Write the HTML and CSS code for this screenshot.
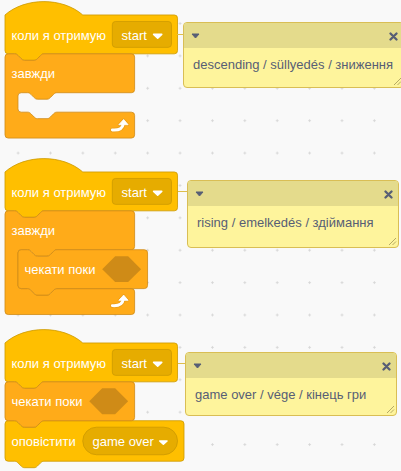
FILE: index.html
```html
<!DOCTYPE html>
<html lang="uk">
<head>
<meta charset="utf-8">
<title>Scratch scripts</title>
<link rel="stylesheet" href="styles.css">
</head>
<body>
<div class="canvas">

  <!-- Script 1 -->
  <svg class="script s1" viewBox="0 0 180 140" width="180" height="140">
    <g transform="scale(0.81)">
      <path class="ev" d="M0,16 c25,-22 71,-22 96,0 H209 a4,4 0 0 1 4,4 V60 a4,4 0 0 1 -4,4 H48 c-2,0 -3,1 -4,2 l-4,4 c-1,1 -2,2 -4,2 h-12 c-2,0 -3,-1 -4,-2 l-4,-4 c-1,-1 -2,-2 -4,-2 H4 a4,4 0 0 1 -4,-4 Z"/>
      <rect class="ev-field" x="132.5" y="24" width="73" height="32" rx="4"/>
      <path class="dd" d="M183.5,40 H193.5 L188.5,44.5 Z"/>
      <path class="ctl" d="M0,68 a4,4 0 0 1 4,-4 H12 c2,0 3,1 4,2 l4,4 c1,1 2,2 4,2 h12 c2,0 3,-1 4,-2 l4,-4 c1,-1 2,-2 4,-2 H156 a4,4 0 0 1 4,4 V108 a4,4 0 0 1 -4,4 H64 c-2,0 -3,1 -4,2 l-4,4 c-1,1 -2,2 -4,2 h-12 c-2,0 -3,-1 -4,-2 l-4,-4 c-1,-1 -2,-2 -4,-2 H20 a4,4 0 0 0 -4,4 V132 a4,4 0 0 0 4,4 H28 c2,0 3,1 4,2 l4,4 c1,1 2,2 4,2 h12 c2,0 3,-1 4,-2 l4,-4 c1,-1 2,-2 4,-2 H156 a4,4 0 0 1 4,4 V164 a4,4 0 0 1 -4,4 H4 a4,4 0 0 1 -4,-4 Z"/>
      <g transform="translate(131,144)">
        <path class="rep-o" d="M1.5,14 C8,14.5 14,13 15,6.5"/>
        <path class="rep-ho" d="M9.5,7.5 L15.5,1 L21,7.5 Z"/>
        <path class="rep" d="M1.5,14 C8,14.5 14,13 15,6.5"/>
        <path class="rep-h" d="M9.5,7.5 L15.5,1 L21,7.5 Z"/>
      </g>
    </g>
    <text class="bt" x="6.5" y="37.5">коли я отримую</text>
    <text class="bt" x="116.6" y="37.5">start</text>
    <text class="bt" x="6.5" y="76.3">завжди</text>
  </svg>

  <!-- Script 2 -->
  <svg class="script s2" viewBox="0 0 180 160" width="180" height="160">
    <g transform="scale(0.81)">
      <path class="ev" d="M0,16 c25,-22 71,-22 96,0 H209 a4,4 0 0 1 4,4 V60 a4,4 0 0 1 -4,4 H48 c-2,0 -3,1 -4,2 l-4,4 c-1,1 -2,2 -4,2 h-12 c-2,0 -3,-1 -4,-2 l-4,-4 c-1,-1 -2,-2 -4,-2 H4 a4,4 0 0 1 -4,-4 Z"/>
      <rect class="ev-field" x="132.5" y="24" width="73" height="32" rx="4"/>
      <path class="dd" d="M183.5,40 H193.5 L188.5,44.5 Z"/>
      <path class="ctl" d="M0,68 a4,4 0 0 1 4,-4 H12 c2,0 3,1 4,2 l4,4 c1,1 2,2 4,2 h12 c2,0 3,-1 4,-2 l4,-4 c1,-1 2,-2 4,-2 H156 a4,4 0 0 1 4,4 V108 a4,4 0 0 1 -4,4 H64 c-2,0 -3,1 -4,2 l-4,4 c-1,1 -2,2 -4,2 h-12 c-2,0 -3,-1 -4,-2 l-4,-4 c-1,-1 -2,-2 -4,-2 H20 a4,4 0 0 0 -4,4 V156 a4,4 0 0 0 4,4 H28 c2,0 3,1 4,2 l4,4 c1,1 2,2 4,2 h12 c2,0 3,-1 4,-2 l4,-4 c1,-1 2,-2 4,-2 H156 a4,4 0 0 1 4,4 V188 a4,4 0 0 1 -4,4 H4 a4,4 0 0 1 -4,-4 Z"/>
      <g transform="translate(16,0)">
        <path class="ctl" d="M0,116 a4,4 0 0 1 4,-4 H12 c2,0 3,1 4,2 l4,4 c1,1 2,2 4,2 h12 c2,0 3,-1 4,-2 l4,-4 c1,-1 2,-2 4,-2 H156 a4,4 0 0 1 4,4 V156 a4,4 0 0 1 -4,4 H48 c-2,0 -3,1 -4,2 l-4,4 c-1,1 -2,2 -4,2 h-12 c-2,0 -3,-1 -4,-2 l-4,-4 c-1,-1 -2,-2 -4,-2 H4 a4,4 0 0 1 -4,-4 Z"/>
        <path class="hex" d="M104,136 L120,120 H136 L152,136 L136,152 H120 Z"/>
      </g>
      <g transform="translate(131,167)">
        <path class="rep-o" d="M1.5,14 C8,14.5 14,13 15,6.5"/>
        <path class="rep-ho" d="M9.5,7.5 L15.5,1 L21,7.5 Z"/>
        <path class="rep" d="M1.5,14 C8,14.5 14,13 15,6.5"/>
        <path class="rep-h" d="M9.5,7.5 L15.5,1 L21,7.5 Z"/>
      </g>
    </g>
    <text class="bt" x="6.5" y="37.5">коли я отримую</text>
    <text class="bt" x="116.6" y="37.5">start</text>
    <text class="bt" x="6.5" y="76.3">завжди</text>
    <text class="bt" x="19.5" y="115.2">чекати поки</text>
  </svg>

  <!-- Script 3 -->
  <svg class="script s3" viewBox="0 0 180 140" width="180" height="140">
    <g transform="scale(0.81)">
      <path class="ev" d="M0,16 c25,-22 71,-22 96,0 H209 a4,4 0 0 1 4,4 V60 a4,4 0 0 1 -4,4 H48 c-2,0 -3,1 -4,2 l-4,4 c-1,1 -2,2 -4,2 h-12 c-2,0 -3,-1 -4,-2 l-4,-4 c-1,-1 -2,-2 -4,-2 H4 a4,4 0 0 1 -4,-4 Z"/>
      <rect class="ev-field" x="132.5" y="24" width="73" height="32" rx="4"/>
      <path class="dd" d="M183.5,40 H193.5 L188.5,44.5 Z"/>
      <path class="ev" d="M0,116 a4,4 0 0 1 4,-4 H12 c2,0 3,1 4,2 l4,4 c1,1 2,2 4,2 h12 c2,0 3,-1 4,-2 l4,-4 c1,-1 2,-2 4,-2 H217 a4,4 0 0 1 4,4 V158 a4,4 0 0 1 -4,4 H48 c-2,0 -3,1 -4,2 l-4,4 c-1,1 -2,2 -4,2 h-12 c-2,0 -3,-1 -4,-2 l-4,-4 c-1,-1 -2,-2 -4,-2 H4 a4,4 0 0 1 -4,-4 Z"/>
      <rect class="ev-field" x="96" y="120" width="117" height="34" rx="17"/>
      <path class="dd" d="M191,137 H200 L195.5,141 Z"/>
      <path class="ctl" d="M0,68 a4,4 0 0 1 4,-4 H12 c2,0 3,1 4,2 l4,4 c1,1 2,2 4,2 h12 c2,0 3,-1 4,-2 l4,-4 c1,-1 2,-2 4,-2 H156 a4,4 0 0 1 4,4 V108 a4,4 0 0 1 -4,4 H48 c-2,0 -3,1 -4,2 l-4,4 c-1,1 -2,2 -4,2 h-12 c-2,0 -3,-1 -4,-2 l-4,-4 c-1,-1 -2,-2 -4,-2 H4 a4,4 0 0 1 -4,-4 Z"/>
      <path class="hex" d="M104,88 L120,72 H136 L152,88 L136,104 H120 Z"/>
    </g>
    <text class="bt" x="6.5" y="37.5">коли я отримую</text>
    <text class="bt" x="116.6" y="37.5">start</text>
    <text class="bt" x="6.5" y="76.3">чекати поки</text>
    <text class="bt" x="6.5" y="116">оповістити</text>
    <text class="bt" x="87.5" y="116">game over</text>
  </svg>

  <!-- Comment connectors -->
  <div class="link l1"></div>
  <div class="link l2"></div>
  <div class="link l3"></div>

  <!-- Comments -->
  <div class="comment c1">
    <div class="comment-bar">
      <svg class="c-arrow" viewBox="0 0 9 6" width="9" height="6"><path d="M1,1 H8 L4.5,5 Z"/></svg>
      <svg class="c-close" viewBox="0 0 9 9" width="9" height="9"><path d="M1.5,1.5 L7.5,7.5 M7.5,1.5 L1.5,7.5"/></svg>
    </div>
    <div class="comment-text">descending / süllyedés / зниження</div>
    <svg class="resize" viewBox="0 0 10 10" width="10" height="10"><path d="M2,9 L9,2 M5.5,9 L9,5.5"/></svg>
  </div>

  <div class="comment c2">
    <div class="comment-bar">
      <svg class="c-arrow" viewBox="0 0 9 6" width="9" height="6"><path d="M1,1 H8 L4.5,5 Z"/></svg>
      <svg class="c-close" viewBox="0 0 9 9" width="9" height="9"><path d="M1.5,1.5 L7.5,7.5 M7.5,1.5 L1.5,7.5"/></svg>
    </div>
    <div class="comment-text">rising / emelkedés / здіймання</div>
    <svg class="resize" viewBox="0 0 10 10" width="10" height="10"><path d="M2,9 L9,2 M5.5,9 L9,5.5"/></svg>
  </div>

  <div class="comment c3">
    <div class="comment-bar">
      <svg class="c-arrow" viewBox="0 0 9 6" width="9" height="6"><path d="M1,1 H8 L4.5,5 Z"/></svg>
      <svg class="c-close" viewBox="0 0 9 9" width="9" height="9"><path d="M1.5,1.5 L7.5,7.5 M7.5,1.5 L1.5,7.5"/></svg>
    </div>
    <div class="comment-text">game over / vége / кінець гри</div>
    <svg class="resize" viewBox="0 0 10 10" width="10" height="10"><path d="M2,9 L9,2 M5.5,9 L9,5.5"/></svg>
  </div>

</div>
</body>
</html>
```

FILE: styles.css
```css
html, body {
  margin: 0;
  padding: 0;
}

body {
  background-color: #F9F9F9;
  font-family: "Liberation Sans", Arial, sans-serif;
  overflow: hidden;
}

.canvas {
  position: relative;
  width: 401px;
  height: 471px;
  overflow: hidden;
  background-image: radial-gradient(circle, #d6d6d6 0.9px, rgba(214, 214, 214, 0) 1.4px);
  background-size: 32.4px 32.4px;
  background-position: 1.9px 7.3px;
}

/* ---- scripts on the free canvas ---- */
.script {
  position: absolute;
  overflow: visible;
  display: block;
}

.s1 { left: 4.5px; top: 2px; }
.s2 { left: 4.5px; top: 159px; }
.s3 { left: 4.5px; top: 330px; }

.ev {
  fill: #FFBF00;
  stroke: #CC9900;
  stroke-width: 1;
}

.ctl {
  fill: #FFAB19;
  stroke: #CF8B17;
  stroke-width: 1;
}

.ev-field {
  fill: #E6AC00;
  stroke: #CC9900;
  stroke-width: 1;
}

.hex {
  fill: #CF8B17;
}

.bt {
  fill: #FFFFFF;
  font-family: "Liberation Sans", Arial, sans-serif;
  font-size: 13px;
}

.dd {
  fill: #FFFFFF;
  stroke: #FFFFFF;
  stroke-width: 2;
  stroke-linejoin: round;
}

.rep-o {
  fill: none;
  stroke: #CF8B17;
  stroke-opacity: 0.45;
  stroke-width: 5.5;
  stroke-linecap: round;
}

.rep-ho {
  fill: #CF8B17;
  fill-opacity: 0.45;
  stroke: #CF8B17;
  stroke-opacity: 0.45;
  stroke-width: 2.5;
  stroke-linejoin: round;
}

.rep {
  fill: none;
  stroke: #FFFFFF;
  stroke-width: 3.6;
  stroke-linecap: round;
}

.rep-h {
  fill: #FFFFFF;
  stroke: #FFFFFF;
  stroke-width: 1;
  stroke-linejoin: round;
}

/* ---- comment connector lines ---- */
.link {
  position: absolute;
  height: 1px;
  background: #DDBE4C;
}

.l1 { left: 177px; top: 34px; width: 6px; }
.l2 { left: 178px; top: 191px; width: 9px; }
.l3 { left: 178px; top: 363px; width: 7px; }

/* ---- comments ---- */
.comment {
  position: absolute;
  box-sizing: border-box;
  display: flex;
  flex-direction: column;
  background: #FEF49C;
  border: 1px solid #D9BE55;
  border-radius: 4px;
  overflow: hidden;
}

.c1 { left: 183px; top: 22px; width: 221px; height: 66px; }
.c2 { left: 187px; top: 180px; width: 212px; height: 68px; }
.c3 { left: 185px; top: 352px; width: 212px; height: 64px; }

.comment-bar {
  flex: 0 0 25px;
  display: flex;
  align-items: center;
  justify-content: space-between;
  padding: 0 5px 0 7px;
  background: #E4DB8C;
}

.c-arrow {
  display: block;
  margin-top: 1px;
}

.c-arrow path {
  fill: #575E75;
  stroke: #575E75;
  stroke-width: 1;
  stroke-linejoin: round;
}

.c-close {
  display: block;
  margin-top: 1px;
}

.c-close path {
  fill: none;
  stroke: #575E75;
  stroke-width: 2.3;
  stroke-linecap: round;
}

.comment-text {
  padding: 9px 9px 0 9px;
  font-size: 13px;
  line-height: 16px;
  color: #575E75;
  white-space: nowrap;
}

.resize {
  position: absolute;
  right: 1px;
  bottom: 1px;
}

.resize path {
  fill: none;
  stroke: #B5A965;
  stroke-width: 1;
}
```
